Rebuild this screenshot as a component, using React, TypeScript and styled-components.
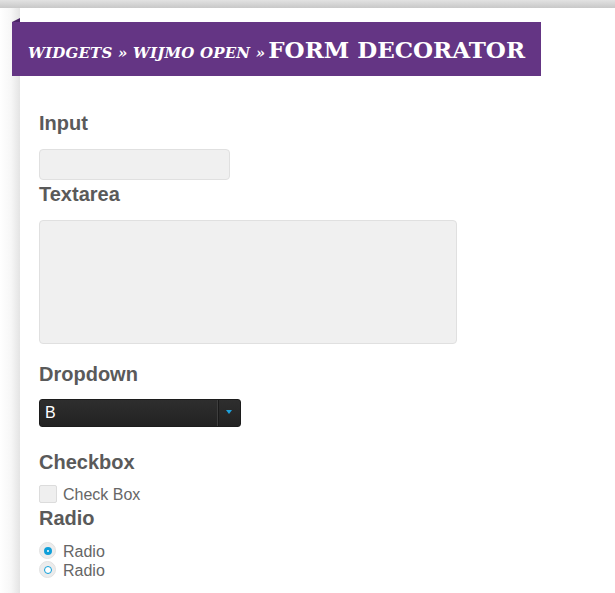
import React from "react";
import styled, { createGlobalStyle } from "styled-components";

const Global = createGlobalStyle`
  html, body { margin: 0; padding: 0; background: #fff; }
  body { font-family: "Liberation Sans", Arial, sans-serif; }
  * { box-sizing: border-box; }
`;

const TopStrip = styled.div`
  height: 8px;
  background: linear-gradient(#e2e2e2, #c8c8c8);
`;

const Shell = styled.div`
  display: flex;
  min-height: calc(100vh - 8px);
`;

const Gutter = styled.div`
  width: 20px;
  flex: none;
  background: linear-gradient(to right, #ffffff 0%, #f7f7f7 55%, #e4e4e4 100%);
`;

const Page = styled.main`
  flex: 1;
  background: #fff;
  padding-top: 14px;
`;

const Banner = styled.header`
  position: relative;
  display: flex;
  align-items: baseline;
  gap: 3px;
  width: 529px;
  height: 54px;
  margin-left: -8px;
  padding: 14px 0 0 16px;
  background: #643584;
  color: #fff;
  font-family: "DejaVu Serif", serif;
  white-space: nowrap;

  &::before {
    content: "";
    position: absolute;
    left: 0;
    top: -4px;
    border-style: solid;
    border-width: 0 0 4px 8px;
    border-color: transparent transparent #4a2566 transparent;
  }
`;

const Crumbs = styled.span`
  font-size: 15px;
  font-style: italic;
  font-weight: 700;
  letter-spacing: 0.2px;
  text-transform: uppercase;
`;

const Title = styled.h1`
  margin: 0;
  font-size: 23px;
  font-weight: 700;
  letter-spacing: 0;
  text-transform: uppercase;
`;

const Form = styled.form`
  display: flex;
  flex-direction: column;
  align-items: flex-start;
  padding: 35px 0 0 19px;
`;

const Label = styled.label<{ $gap: number }>`
  display: block;
  margin-bottom: ${(p) => p.$gap}px;
  font-size: 20px;
  line-height: 24px;
  font-weight: 700;
  color: #5a5a5a;
`;

const TextInput = styled.input<{ $gap: number }>`
  width: 191px;
  height: 31px;
  margin: 0 0 ${(p) => p.$gap}px;
  border: 1px solid #e0e0e0;
  border-radius: 4px;
  background: #f0f0f0;
  outline: none;
`;

const TextArea = styled.textarea<{ $gap: number }>`
  width: 418px;
  height: 124px;
  margin: 0 0 ${(p) => p.$gap}px;
  border: 1px solid #e0e0e0;
  border-radius: 4px;
  background: #f0f0f0;
  resize: none;
  outline: none;
`;

const Select = styled.div<{ $gap: number }>`
  display: flex;
  width: 202px;
  height: 28px;
  margin-bottom: ${(p) => p.$gap}px;
  border: 1px solid #1c1c1c;
  border-radius: 3px;
  background: linear-gradient(#2e2e2e, #222222);
  color: #fff;
  font-size: 16px;
  line-height: 26px;
`;

const SelectValue = styled.span`
  flex: 1;
  padding-left: 5px;
`;

const SelectTrigger = styled.span`
  display: flex;
  align-items: center;
  justify-content: center;
  width: 23px;
  border-left: 1px solid #3e3e3e;
  box-shadow: inset 1px 0 0 #1a1a1a;
`;

const Arrow = styled.span`
  width: 0;
  height: 0;
  margin-top: -2px;
  border-style: solid;
  border-width: 4px 3.5px 0 3.5px;
  border-color: #1ea2dc transparent transparent transparent;
`;

const OptionRow = styled.div<{ $height: number; $line: number; $gap: number }>`
  display: flex;
  align-items: flex-start;
  gap: 6px;
  height: ${(p) => p.$height}px;
  margin-bottom: ${(p) => p.$gap}px;
  font-size: 16px;
  line-height: ${(p) => p.$line}px;
  color: #666;
`;

const CheckBox = styled.span`
  width: 18px;
  height: 18px;
  border: 1px solid #dcdcdc;
  border-radius: 2px;
  background: #efefef;
`;

const RadioCircle = styled.span`
  display: flex;
  align-items: center;
  justify-content: center;
  width: 17px;
  height: 17px;
  margin-right: 1px;
  border: 1px solid #e2e2e2;
  border-radius: 50%;
  background: #ececec;
`;

const RadioDot = styled.span<{ $checked: boolean }>`
  width: 8px;
  height: 8px;
  border-radius: 50%;
  background: #fff;
  border: ${(p) => (p.$checked ? "3px" : "1.5px")} solid #0f9fd9;
`;

const Radio = ({ checked }: { checked: boolean }) => (
  <OptionRow $height={19} $line={20} $gap={0}>
    <RadioCircle>
      <RadioDot $checked={checked} />
    </RadioCircle>
    Radio
  </OptionRow>
);

export default function App() {
  return (
    <>
      <Global />
      <TopStrip />
      <Shell>
        <Gutter />
        <Page>
          <Banner>
            <Crumbs>Widgets » Wijmo Open »</Crumbs>
            <Title>Form Decorator</Title>
          </Banner>
          <Form onSubmit={(e) => e.preventDefault()}>
            <Label $gap={14}>Input</Label>
            <TextInput $gap={2} />
            <Label $gap={14}>Textarea</Label>
            <TextArea $gap={18} />
            <Label $gap={13}>Dropdown</Label>
            <Select $gap={23}>
              <SelectValue>B</SelectValue>
              <SelectTrigger>
                <Arrow />
              </SelectTrigger>
            </Select>
            <Label $gap={11}>Checkbox</Label>
            <OptionRow $height={18} $line={20} $gap={3}>
              <CheckBox />
              Check Box
            </OptionRow>
            <Label $gap={12}>Radio</Label>
            <Radio checked />
            <Radio checked={false} />
          </Form>
        </Page>
      </Shell>
    </>
  );
}
